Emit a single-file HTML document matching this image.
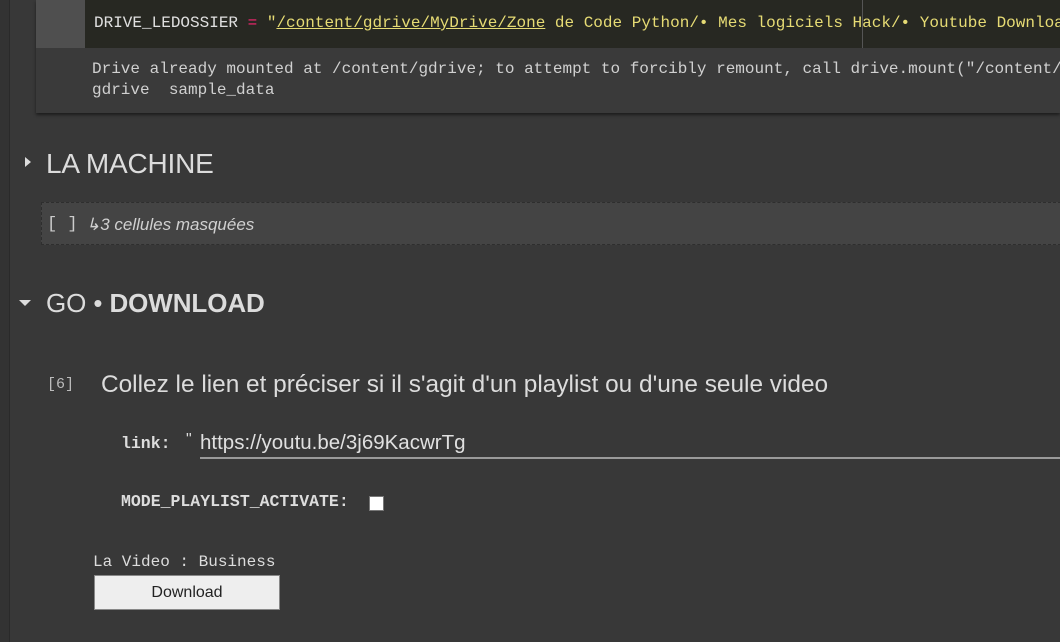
<!DOCTYPE html>
<html><head><meta charset="utf-8"><style>
html,body{margin:0;width:1060px;height:642px;overflow:hidden}
body{background:#383838;position:relative;font-family:"Liberation Sans",sans-serif;color:#d5d5d5}
.a{position:absolute;white-space:pre}
.mono{font-family:"Liberation Mono",monospace}
</style></head><body>
<div class="a" style="left:0;top:0;width:9px;height:642px;background:#333"></div>
<div class="a" style="left:9px;top:0;width:1px;height:642px;background:#2a2a2a"></div>
<div class="a" style="left:36px;top:0;width:1024px;height:113px;background:#3a3a3a;box-shadow:0 2px 3px rgba(0,0,0,.5);overflow:hidden">
<div class="a" style="left:0;top:0;width:49px;height:48px;background:#4f4f4f"></div>
<div class="a" style="left:49px;top:0;width:975px;height:48px;background:#272822"></div>
<div class="a" style="left:826px;top:0;width:1px;height:48px;background:#555"></div>
<div class="a mono" style="left:58px;top:14px;font-size:16px;color:#e0e0e0">DRIVE_LEDOSSIER <span style="color:#f92672">=</span> <span style="color:#e6db74">"<span style="text-decoration:underline">/content/gdrive/MyDrive/Zone</span> de Code Python/• Mes logiciels Hack/• Youtube Download</span></div>
<div class="a mono" style="left:56px;top:59px;font-size:16px;line-height:21px;color:#d0d0d0">Drive already mounted at /content/gdrive; to attempt to forcibly remount, call drive.mount("/content/gdrive", force_remount=True).
gdrive  sample_data</div>
</div>
<div class="a" style="left:25px;top:157px;width:0;height:0;border-top:5px solid transparent;border-bottom:5px solid transparent;border-left:6px solid #ddd"></div>
<div class="a" style="left:46px;top:148px;font-size:28px;letter-spacing:-0.2px;color:#dcdcdc">LA MACHINE</div>
<div class="a" style="left:41px;top:202px;width:1019px;height:41px;background:#444;border:1px dashed #2e2e2e;border-right:none"></div>
<div class="a mono" style="left:47px;top:215px;font-size:17px;color:#ccc">[ ]</div>
<div class="a" style="left:86px;top:215px;font-size:17px;font-style:italic;color:#d0d0d0">↳3 cellules masquées</div>
<div class="a" style="left:19px;top:300px;width:0;height:0;border-left:6px solid transparent;border-right:6px solid transparent;border-top:6px solid #ddd"></div>
<div class="a" style="left:46px;top:288px;font-size:26px;letter-spacing:-0.1px;color:#dcdcdc">GO • <b>DOWNLOAD</b></div>
<div class="a mono" style="left:47px;top:376px;font-size:15px;color:#bbb">[6]</div>
<div class="a" style="left:101px;top:371px;font-size:24.4px;color:#dcdcdc">Collez le lien et préciser si il s'agit d'un playlist ou d'une seule video</div>
<div class="a mono" style="left:121px;top:434px;font-size:16.5px;font-weight:bold;color:#ddd">link:</div>
<div class="a" style="left:186px;top:431px;font-size:16px;color:#ddd">"</div>
<div class="a" style="left:200px;top:431px;font-size:20.5px;color:#e0e0e0">https://youtu.be/3j69KacwrTg</div>
<div class="a" style="left:200px;top:457px;width:860px;height:2px;background:#9a9a9a"></div>
<div class="a mono" style="left:121px;top:492px;font-size:16.5px;font-weight:bold;color:#ddd">MODE_PLAYLIST_ACTIVATE:</div>
<div class="a" style="left:369px;top:496px;width:13px;height:13px;background:#fff;border:1px solid #777"></div>
<div class="a mono" style="left:93px;top:553px;font-size:16px;color:#ddd">La Video : Business</div>
<div class="a" style="left:94px;top:575px;width:186px;height:35px;background:#eee;border:1px solid #888;box-sizing:border-box;color:#222;font-size:16px;text-align:center;line-height:34px">Download</div>
</body></html>
